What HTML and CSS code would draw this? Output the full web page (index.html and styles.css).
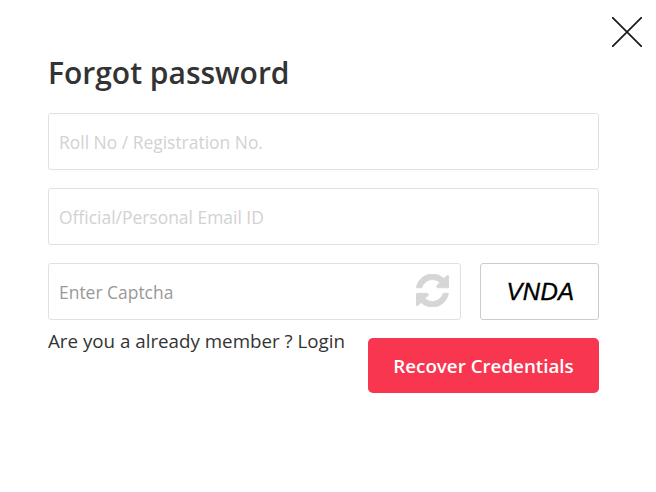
FILE: index.html
```html
<!DOCTYPE html>
<html lang="en">
<head>
<meta charset="utf-8">
<title>Forgot password</title>
<link rel="stylesheet" href="styles.css">
</head>
<body>
<main class="modal">
  <button class="close" type="button" aria-label="Close">
    <svg viewBox="0 0 30 30" width="30" height="30"><path d="M0.5 0.5L29.5 29.5M29.5 0.5L0.5 29.5" fill="none" stroke="#1a1a1a" stroke-width="1.7" stroke-linecap="round"/></svg>
  </button>
  <h1 class="title">Forgot password</h1>
  <form class="form">
    <input class="field" type="text" placeholder="Roll No / Registration No.">
    <input class="field" type="text" placeholder="Official/Personal Email ID">
    <div class="captcha-row">
      <div class="captcha-input">
        <input class="field field-dark" type="text" placeholder="Enter Captcha">
        <svg class="refresh" viewBox="0 0 1536 1536" width="33" height="33"><path fill="#d6d6d6" stroke="#d6d6d6" stroke-width="40" d="M1511 928q0 5-1 7-64 268-268 434.5t-478 166.5q-146 0-282.5-55t-243.5-157l-129 129q-19 19-45 19t-45-19-19-45v-448q0-26 19-45t45-19h448q26 0 45 19t19 45-19 45l-137 137q71 66 161 102t187 36q134 0 250-65t186-179q11-17 53-117 8-23 30-23h192q13 0 22.5 9.5t9.5 22.5zm25-800v448q0 26-19 45t-45 19h-448q-26 0-45-19t-19-45 19-45l138-138q-148-137-349-137-134 0-250 65t-186 179q-11 17-53 117-8 23-30 23h-199q-13 0-22.5-9.5t-9.5-22.5v-7q65-268 270-434.5t480-166.5q146 0 284 55.5t245 156.5l130-129q19-19 45-19t45 19 19 45z"/></svg>
      </div>
      <div class="captcha-image">VNDA</div>
    </div>
    <div class="actions">
      <p class="login">Are you a already member ? <a href="#">Login</a></p>
      <button class="submit" type="button">Recover Credentials</button>
    </div>
  </form>
</main>
</body>
</html>
```
FILE: styles.css
```css
* { box-sizing: border-box; }
html, body { margin: 0; background: #fff; }
body { font-family: "Open Sans", sans-serif; color: #333; }
.modal { position: relative; width: 656px; height: 492px; padding: 54px 57px 0 48px; overflow: hidden; }
.close { position: absolute; top: 17px; left: 612px; width: 30px; height: 30px; padding: 0; border: 0; background: none; line-height: 0; }
.title { margin: 0 0 21px; font-size: 30px; line-height: 38px; font-weight: 600; color: #333; }
.form { display: flex; flex-direction: column; gap: 18px; }
.field { display: block; width: 100%; height: 57px; padding: 0 10px; border: 1px solid #e1e1e1; border-radius: 3px; background: #fff; font: 400 17.45px "Open Sans", sans-serif; color: #333; outline: 0; }
.field::placeholder { color: #d2d2d2; opacity: 1; }
.field-dark::placeholder { color: #999; }
.captcha-row { display: flex; justify-content: space-between; }
.captcha-input { position: relative; width: 413px; }
.refresh { position: absolute; top: 11px; right: 12px; }
.captcha-image { width: 119px; height: 57px; padding-left: 2px; border: 1px solid #ccc; border-radius: 3px; display: flex; align-items: center; justify-content: center; font: italic 400 24px "Liberation Sans", sans-serif; letter-spacing: 0.3px; color: #000; -webkit-text-stroke: 0.35px #000; }
.actions { display: flex; justify-content: space-between; align-items: flex-start; }
.login { margin: -9px 0 0; font-size: 18.75px; line-height: 24px; color: #333; }
.login a { color: inherit; text-decoration: none; }
.submit { width: 231px; height: 55px; border: 0; border-radius: 5px; background: #f83650; color: #fff; font: 600 18.75px "Open Sans", sans-serif; }
```
